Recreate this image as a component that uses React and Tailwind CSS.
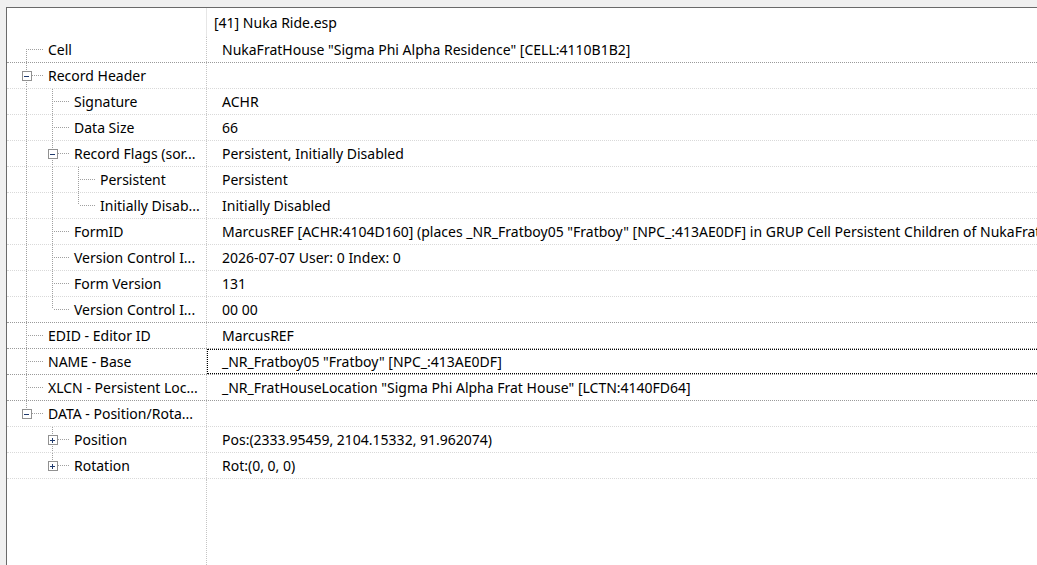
import React from "react";

const tree = [
  { label: "Cell", value: 'NukaFratHouse "Sigma Phi Alpha Residence" [CELL:4110B1B2]' },
  {
    label: "Record Header",
    value: "",
    box: "minus",
    children: [
      { label: "Signature", value: "ACHR" },
      { label: "Data Size", value: "66" },
      {
        label: "Record Flags (sor...",
        value: "Persistent, Initially Disabled",
        box: "minus",
        children: [
          { label: "Persistent", value: "Persistent" },
          { label: "Initially Disab...", value: "Initially Disabled" },
        ],
      },
      {
        label: "FormID",
        value:
          'MarcusREF [ACHR:4104D160] (places _NR_Fratboy05 "Fratboy" [NPC_:413AE0DF] in GRUP Cell Persistent Children of NukaFratHouse "Sigma Phi Alpha Residence" [CELL:4110B1B2])',
      },
      { label: "Version Control I...", value: "2026-07-07 User: 0 Index: 0" },
      { label: "Form Version", value: "131" },
      { label: "Version Control I...", value: "00 00" },
    ],
  },
  { label: "EDID - Editor ID", value: "MarcusREF" },
  { label: "NAME - Base", value: '_NR_Fratboy05 "Fratboy" [NPC_:413AE0DF]', focus: true },
  {
    label: "XLCN - Persistent Loc...",
    value: '_NR_FratHouseLocation "Sigma Phi Alpha Frat House" [LCTN:4140FD64]',
  },
  {
    label: "DATA - Position/Rota...",
    value: "",
    box: "minus",
    children: [
      { label: "Position", value: "Pos:(2333.95459, 2104.15332, 91.962074)", box: "plus" },
      { label: "Rotation", value: "Rot:(0, 0, 0)", box: "plus" },
    ],
  },
];

function flatten(nodes, level, anc, out) {
  nodes.forEach((n, i) => {
    const last = i === nodes.length - 1;
    const first = level === 0 && i === 0;
    out.push({ ...n, level, anc, last, first });
    if (n.children) flatten(n.children, level + 1, [...anc, !last], out);
  });
  return out;
}

const rows = flatten(tree, 0, [], []);

const LINE = "#a0a0a0";

function Guide({ row }) {
  const vx = 19 + 26 * row.level;
  const textStart = vx + 22;
  const cy = 12;
  const hasBox = !!row.box;
  const dash = "1 1";
  return (
    <svg width={textStart} height={25} className="shrink-0 overflow-visible" shapeRendering="crispEdges">
      {row.anc.map((cont, L) =>
        cont ? (
          <line key={L} x1={19 + 26 * L + 0.5} x2={19 + 26 * L + 0.5} y1={0} y2={26} stroke={LINE} strokeDasharray={dash} />
        ) : null
      )}
      {!row.first && (
        <line x1={vx + 0.5} x2={vx + 0.5} y1={0} y2={hasBox ? cy - 4 : cy} stroke={LINE} strokeDasharray={dash} />
      )}
      {!row.last && (
        <line x1={vx + 0.5} x2={vx + 0.5} y1={hasBox ? cy + 5 : cy} y2={26} stroke={LINE} strokeDasharray={dash} />
      )}
      <line x1={hasBox ? vx + 6 : vx + 2} x2={textStart - 4} y1={cy + 0.5} y2={cy + 0.5} stroke={LINE} strokeDasharray={dash} />
      {hasBox && (
        <g>
          <rect x={vx - 4 + 0.5} y={cy - 4 + 0.5} width={9} height={9} fill="#ffffff" stroke="#919191" />
          <line x1={vx - 2} x2={vx + 3} y1={cy + 1} y2={cy + 1} stroke="#1f3a6e" />
          {row.box === "plus" && <line x1={vx + 0.5} x2={vx + 0.5} y1={cy - 1} y2={cy + 4} stroke="#1f3a6e" />}
        </g>
      )}
    </svg>
  );
}

export default function App() {
  return (
    <div
      className="w-[1037px] h-[565px] bg-[#f0f0f0] pt-[7px] pl-[6px] overflow-hidden text-[14px] text-black"
      style={{ fontFamily: '"Noto Sans", "Open Sans", sans-serif' }}
    >
      <div className="h-full bg-white border-t border-l border-[#6a6a6a] flex flex-col">
        <div className="flex h-[29px] items-center">
          <div className="w-[200px] h-full border-r border-[#e6e6e6] shrink-0" />
          <div className="pl-[7px] whitespace-nowrap">[41] Nuka Ride.esp</div>
        </div>
        {rows.map((row, i) => {
          const next = rows[i + 1];
          const dark = next && next.level === 0;
          return (
            <div
              key={i}
              className={`flex h-[26px] border-b border-dotted ${dark ? "border-[#9a9a9a]" : "border-[#d9d9d9]"}`}
            >
              <div className="w-[200px] shrink-0 border-r border-dotted border-[#c4c4c4] flex items-center overflow-hidden whitespace-nowrap">
                <Guide row={row} />
                <span className="leading-[25px]">{row.label}</span>
              </div>
              <div className="relative flex-1 min-w-0 pl-[15px] flex items-center overflow-hidden whitespace-nowrap">
                <span className="leading-[25px]">{row.value}</span>
                {row.focus && (
                  <div className="absolute left-0 right-[-2px] top-0 bottom-0 border border-dotted border-black" />
                )}
              </div>
            </div>
          );
        })}
        <div className="flex flex-1">
          <div className="w-[200px] shrink-0 border-r border-dotted border-[#c4c4c4]" />
        </div>
      </div>
    </div>
  );
}
